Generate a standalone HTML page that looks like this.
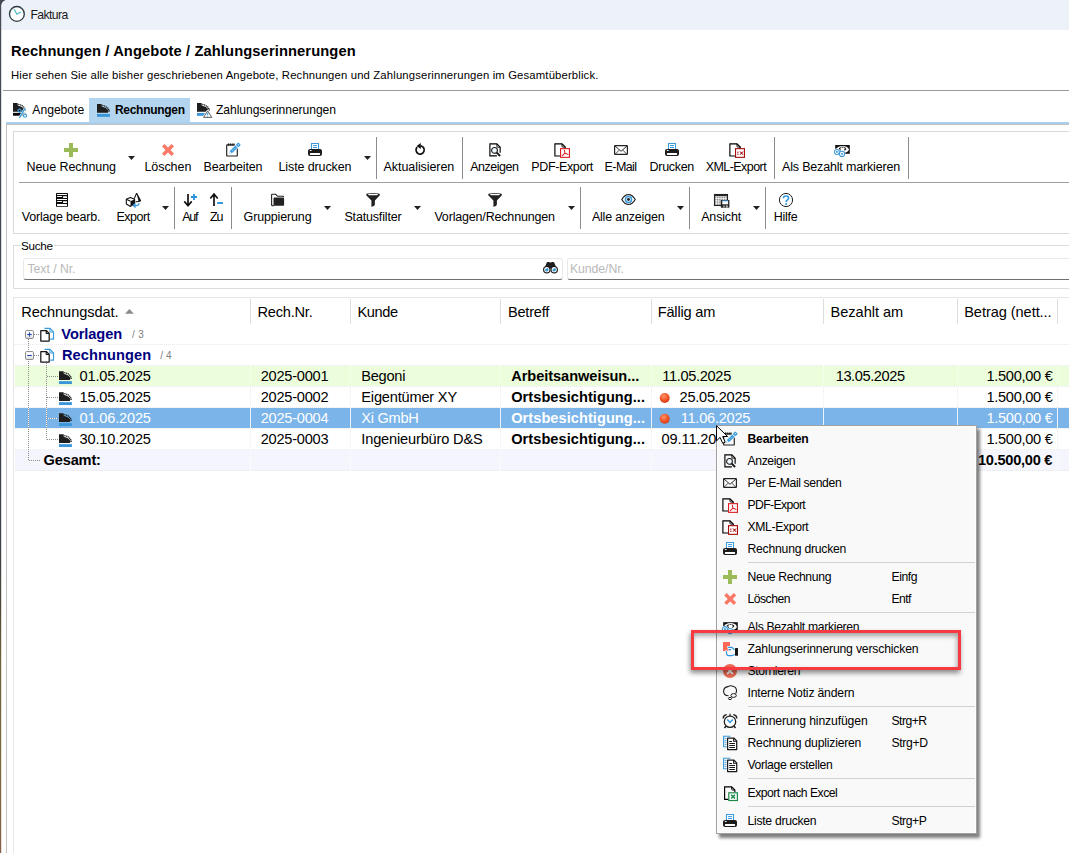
<!DOCTYPE html>
<html><head><meta charset="utf-8"><title>Faktura</title>
<style>
html,body{margin:0;padding:0;}
body{width:1069px;height:853px;position:relative;overflow:hidden;background:#fff;font-family:"Liberation Sans",sans-serif;}
.t{position:absolute;white-space:nowrap;line-height:20px;}
.r{position:absolute;}
svg{overflow:visible;}
</style></head><body>
<div class="r" style="left:0px;top:0px;width:1069px;height:30px;background:#edf1f8;"></div>
<svg class="r" style="left:0px;top:0px;" width="8" height="853" viewBox="0 0 8 853"><defs><linearGradient id="lb" gradientUnits="userSpaceOnUse" x1="0" y1="0" x2="0" y2="853"><stop offset="0" stop-color="#454c53"/><stop offset="0.64" stop-color="#3c4248"/><stop offset="0.71" stop-color="#4d4838"/><stop offset="0.77" stop-color="#6e6238"/><stop offset="0.9" stop-color="#7c6c3e"/><stop offset="1" stop-color="#855f48"/></linearGradient></defs><path d="M0 0H6.2Q1.6 0.8 1.2 6V853H0Z" fill="url(#lb)"/><path d="M6.2 0Q1.6 0.8 1.2 6" stroke="#f6f8fc" stroke-width="0.8" fill="none" transform="translate(0.7,0.6)"/></svg>
<svg class="r" style="left:8px;top:5px;" width="18" height="18" viewBox="0 0 18 18"><circle cx="8.9" cy="8.9" r="7.4" fill="#fff" stroke="#2c3a42" stroke-width="1.35"/><path d="M6.2 4.5L8.9 9.3L12.5 7.3" stroke="#4dbdc0" stroke-width="1.3" fill="none" stroke-linejoin="round" stroke-linecap="round"/></svg>
<span class="t" style="left:30.40px;top:5px;font-size:12.2px;color:#1a1a1a;letter-spacing:-0.562px;">Faktura</span>
<span class="t" style="left:11.00px;top:41px;font-size:14.7px;font-weight:700;color:#000;letter-spacing:0.116px;">Rechnungen / Angebote / Zahlungserinnerungen</span>
<span class="t" style="left:11.00px;top:65px;font-size:11.3px;color:#000;letter-spacing:0.151px;">Hier sehen Sie alle bisher geschriebenen Angebote, Rechnungen und Zahlungserinnerungen im Gesamtüberblick.</span>
<div class="r" style="left:3px;top:90px;width:1066px;height:1px;background:#9a9a9a;"></div>
<div class="r" style="left:89px;top:98px;width:101px;height:24px;background:#b3d5ef;"></div>
<div class="r" style="left:6px;top:122px;width:1063px;height:2px;background:#a9cfee;"></div>
<div class="r" style="left:6px;top:124px;width:1063px;height:1px;background:#c2c2c2;"></div>
<div class="r" style="left:6px;top:124px;width:1px;height:729px;background:#c2c2c2;"></div>
<span class="t" style="left:32.30px;top:100px;font-size:12.2px;color:#000;letter-spacing:-0.034px;">Angebote</span>
<span class="t" style="left:115.00px;top:100px;font-size:12px;font-weight:700;color:#000;letter-spacing:-0.297px;">Rechnungen</span>
<span class="t" style="left:216.00px;top:100px;font-size:12.1px;color:#000;letter-spacing:-0.057px;">Zahlungserinnerungen</span>
<div class="r" style="left:13px;top:131px;width:1056px;height:103px;background:#fff;box-sizing:border-box;border:1px solid #d9d9d9;border-right:none;"></div>
<div class="r" style="left:19px;top:182px;width:1050px;height:1px;background:#a0a0a0;"></div>
<span class="t" style="left:26.50px;top:157px;font-size:12.5px;color:#000;letter-spacing:-0.071px;">Neue Rechnung</span>
<svg class="r" style="left:128px;top:156px;" width="7" height="4" viewBox="0 0 7 4"><path d="M0 0H7L3.5 4Z" fill="#222"/></svg>
<span class="t" style="left:144.40px;top:157px;font-size:12.5px;color:#000;letter-spacing:-0.044px;">Löschen</span>
<span class="t" style="left:203.50px;top:157px;font-size:12.5px;color:#000;letter-spacing:-0.162px;">Bearbeiten</span>
<span class="t" style="left:278.50px;top:157px;font-size:12.5px;color:#000;letter-spacing:-0.112px;">Liste drucken</span>
<svg class="r" style="left:364px;top:156px;" width="7" height="4" viewBox="0 0 7 4"><path d="M0 0H7L3.5 4Z" fill="#222"/></svg>
<div class="r" style="left:376px;top:137px;width:1px;height:42px;background:#8c8c8c;"></div>
<span class="t" style="left:383.60px;top:157px;font-size:12.5px;color:#000;letter-spacing:-0.072px;">Aktualisieren</span>
<div class="r" style="left:462px;top:137px;width:1px;height:42px;background:#8c8c8c;"></div>
<span class="t" style="left:470.20px;top:157px;font-size:12.5px;color:#000;letter-spacing:-0.475px;">Anzeigen</span>
<span class="t" style="left:531.30px;top:157px;font-size:12.5px;color:#000;letter-spacing:-0.365px;">PDF-Export</span>
<span class="t" style="left:604.60px;top:157px;font-size:12.5px;color:#000;letter-spacing:-0.605px;">E-Mail</span>
<span class="t" style="left:649.60px;top:157px;font-size:12.5px;color:#000;letter-spacing:-0.308px;">Drucken</span>
<span class="t" style="left:705.70px;top:157px;font-size:12.5px;color:#000;letter-spacing:-0.554px;">XML-Export</span>
<div class="r" style="left:774px;top:137px;width:1px;height:42px;background:#8c8c8c;"></div>
<span class="t" style="left:782.00px;top:157px;font-size:12.5px;color:#000;letter-spacing:-0.169px;">Als Bezahlt markieren</span>
<div class="r" style="left:908px;top:137px;width:1px;height:42px;background:#8c8c8c;"></div>
<span class="t" style="left:21.80px;top:207px;font-size:12.5px;color:#000;letter-spacing:-0.209px;">Vorlage bearb.</span>
<span class="t" style="left:116.50px;top:207px;font-size:12.5px;color:#000;letter-spacing:-0.505px;">Export</span>
<svg class="r" style="left:162px;top:206px;" width="7" height="4" viewBox="0 0 7 4"><path d="M0 0H7L3.5 4Z" fill="#222"/></svg>
<div class="r" style="left:174px;top:187px;width:1px;height:42px;background:#8c8c8c;"></div>
<span class="t" style="left:182.20px;top:207px;font-size:12.5px;color:#000;letter-spacing:-1.194px;">Auf</span>
<span class="t" style="left:210.00px;top:207px;font-size:12.5px;color:#000;letter-spacing:-1.188px;">Zu</span>
<div class="r" style="left:231px;top:187px;width:1px;height:42px;background:#8c8c8c;"></div>
<span class="t" style="left:243.60px;top:207px;font-size:12.5px;color:#000;letter-spacing:-0.149px;">Gruppierung</span>
<svg class="r" style="left:324px;top:206px;" width="7" height="4" viewBox="0 0 7 4"><path d="M0 0H7L3.5 4Z" fill="#222"/></svg>
<span class="t" style="left:344.40px;top:207px;font-size:12.5px;color:#000;letter-spacing:-0.159px;">Statusfilter</span>
<svg class="r" style="left:414px;top:206px;" width="7" height="4" viewBox="0 0 7 4"><path d="M0 0H7L3.5 4Z" fill="#222"/></svg>
<span class="t" style="left:434.40px;top:207px;font-size:12.5px;color:#000;letter-spacing:-0.173px;">Vorlagen/Rechnungen</span>
<svg class="r" style="left:568px;top:206px;" width="7" height="4" viewBox="0 0 7 4"><path d="M0 0H7L3.5 4Z" fill="#222"/></svg>
<div class="r" style="left:580px;top:187px;width:1px;height:42px;background:#8c8c8c;"></div>
<span class="t" style="left:591.90px;top:207px;font-size:12.5px;color:#000;letter-spacing:-0.196px;">Alle anzeigen</span>
<svg class="r" style="left:677px;top:206px;" width="7" height="4" viewBox="0 0 7 4"><path d="M0 0H7L3.5 4Z" fill="#222"/></svg>
<div class="r" style="left:689px;top:187px;width:1px;height:42px;background:#8c8c8c;"></div>
<span class="t" style="left:701.20px;top:207px;font-size:12.5px;color:#000;letter-spacing:-0.165px;">Ansicht</span>
<svg class="r" style="left:753px;top:206px;" width="7" height="4" viewBox="0 0 7 4"><path d="M0 0H7L3.5 4Z" fill="#222"/></svg>
<div class="r" style="left:765px;top:187px;width:1px;height:42px;background:#8c8c8c;"></div>
<span class="t" style="left:773.70px;top:207px;font-size:12.5px;color:#000;letter-spacing:-0.278px;">Hilfe</span>
<div class="r" style="left:13px;top:245px;width:1056px;height:44px;background:#fff;box-sizing:border-box;border:1px solid #dcdcdc;border-right:none;"></div>
<div class="r" style="left:20.5px;top:240px;width:33.5px;height:12px;background:#fff;"></div>
<span class="t" style="left:21.00px;top:236px;font-size:11.7px;color:#000;letter-spacing:-0.292px;">Suche</span>
<div class="r" style="left:23px;top:257.5px;width:539.5px;height:22.5px;background:#fff;box-sizing:border-box;border:1px solid #e9e9e9;border-bottom:1px solid #707070;border-radius:3px;"></div>
<span class="t" style="left:27.50px;top:259px;font-size:12.3px;color:#b9b9b9;letter-spacing:-0.058px;">Text / Nr.</span>
<div class="r" style="left:566.5px;top:257.5px;width:510px;height:22.5px;background:#fff;box-sizing:border-box;border:1px solid #e9e9e9;border-bottom:1px solid #707070;border-radius:3px;"></div>
<span class="t" style="left:570.00px;top:259px;font-size:12.3px;color:#b9b9b9;letter-spacing:-0.087px;">Kunde/Nr.</span>
<div class="r" style="left:13px;top:297px;width:1056px;height:556px;background:#fff;box-sizing:border-box;border:1px solid #e6e6e6;border-right:none;border-bottom:none;"></div>
<span class="t" style="left:21.20px;top:302px;font-size:14.6px;color:#000;letter-spacing:-0.060px;">Rechnungsdat.</span>
<svg class="r" style="left:125.2px;top:309px;" width="9" height="5" viewBox="0 0 9 5"><path d="M0 4.8H8.8L4.4 0Z" fill="#8a8a8a"/></svg>
<span class="t" style="left:257.40px;top:302px;font-size:14.6px;color:#000;letter-spacing:-0.199px;">Rech.Nr.</span>
<span class="t" style="left:357.40px;top:302px;font-size:14.6px;color:#000;letter-spacing:-0.381px;">Kunde</span>
<span class="t" style="left:508.00px;top:302px;font-size:14.6px;color:#000;letter-spacing:-0.246px;">Betreff</span>
<span class="t" style="left:657.70px;top:302px;font-size:14.6px;color:#000;letter-spacing:-0.192px;">Fällig am</span>
<span class="t" style="left:830.60px;top:302px;font-size:14.6px;color:#000;letter-spacing:-0.048px;">Bezahlt am</span>
<span class="t" style="left:964.20px;top:302px;font-size:14.6px;color:#000;letter-spacing:-0.069px;">Betrag (nett...</span>
<div class="r" style="left:250px;top:299px;width:1px;height:25px;background:#dedede;"></div>
<div class="r" style="left:350px;top:299px;width:1px;height:25px;background:#dedede;"></div>
<div class="r" style="left:500px;top:299px;width:1px;height:25px;background:#dedede;"></div>
<div class="r" style="left:651px;top:299px;width:1px;height:25px;background:#dedede;"></div>
<div class="r" style="left:823px;top:299px;width:1px;height:25px;background:#dedede;"></div>
<div class="r" style="left:957px;top:299px;width:1px;height:25px;background:#dedede;"></div>
<div class="r" style="left:1057px;top:299px;width:1px;height:25px;background:#dedede;"></div>
<div class="r" style="left:15px;top:366px;width:1054px;height:20px;background:#ecfddc;"></div>
<div class="r" style="left:15px;top:408px;width:1054px;height:20px;background:#7ab4e9;"></div>
<div class="r" style="left:15px;top:450px;width:1054px;height:21px;background:#f5f6fd;"></div>
<div class="r" style="left:15px;top:344px;width:1054px;height:1px;background:transparent;border-top:1px dotted #e9e9e9;height:0;"></div>
<div class="r" style="left:15px;top:365px;width:1054px;height:1px;background:transparent;border-top:1px dotted #e9e9e9;height:0;"></div>
<div class="r" style="left:15px;top:386px;width:1054px;height:1px;background:transparent;border-top:1px dotted #e9e9e9;height:0;"></div>
<div class="r" style="left:15px;top:407px;width:1054px;height:1px;background:transparent;border-top:1px dotted #e9e9e9;height:0;"></div>
<div class="r" style="left:15px;top:428px;width:1054px;height:1px;background:transparent;border-top:1px dotted #e9e9e9;height:0;"></div>
<div class="r" style="left:15px;top:449px;width:1054px;height:1px;background:transparent;border-top:1px dotted #e9e9e9;height:0;"></div>
<div class="r" style="left:15px;top:470px;width:1054px;height:1px;background:transparent;border-top:1px dotted #e9e9e9;height:0;"></div>
<div class="r" style="left:250px;top:387px;width:1px;height:63px;background:transparent;border-left:1px dotted #ececec;width:0;"></div>
<div class="r" style="left:250px;top:366px;width:1px;height:20px;background:transparent;border-left:1px dotted #fbfffa;width:0;"></div>
<div class="r" style="left:250px;top:450px;width:1px;height:21px;background:transparent;border-left:1px dotted #ffffff;width:0;"></div>
<div class="r" style="left:250px;top:408px;width:1px;height:20px;background:#eaf3fc;"></div>
<div class="r" style="left:350px;top:387px;width:1px;height:63px;background:transparent;border-left:1px dotted #ececec;width:0;"></div>
<div class="r" style="left:350px;top:366px;width:1px;height:20px;background:transparent;border-left:1px dotted #fbfffa;width:0;"></div>
<div class="r" style="left:350px;top:450px;width:1px;height:21px;background:transparent;border-left:1px dotted #ffffff;width:0;"></div>
<div class="r" style="left:350px;top:408px;width:1px;height:20px;background:#eaf3fc;"></div>
<div class="r" style="left:500px;top:387px;width:1px;height:63px;background:transparent;border-left:1px dotted #ececec;width:0;"></div>
<div class="r" style="left:500px;top:366px;width:1px;height:20px;background:transparent;border-left:1px dotted #fbfffa;width:0;"></div>
<div class="r" style="left:500px;top:450px;width:1px;height:21px;background:transparent;border-left:1px dotted #ffffff;width:0;"></div>
<div class="r" style="left:500px;top:408px;width:1px;height:20px;background:#eaf3fc;"></div>
<div class="r" style="left:651px;top:387px;width:1px;height:63px;background:transparent;border-left:1px dotted #ececec;width:0;"></div>
<div class="r" style="left:651px;top:366px;width:1px;height:20px;background:transparent;border-left:1px dotted #fbfffa;width:0;"></div>
<div class="r" style="left:651px;top:450px;width:1px;height:21px;background:transparent;border-left:1px dotted #ffffff;width:0;"></div>
<div class="r" style="left:651px;top:408px;width:1px;height:20px;background:#eaf3fc;"></div>
<div class="r" style="left:823px;top:387px;width:1px;height:63px;background:transparent;border-left:1px dotted #ececec;width:0;"></div>
<div class="r" style="left:823px;top:366px;width:1px;height:20px;background:transparent;border-left:1px dotted #fbfffa;width:0;"></div>
<div class="r" style="left:823px;top:450px;width:1px;height:21px;background:transparent;border-left:1px dotted #ffffff;width:0;"></div>
<div class="r" style="left:823px;top:408px;width:1px;height:20px;background:#eaf3fc;"></div>
<div class="r" style="left:957px;top:387px;width:1px;height:63px;background:transparent;border-left:1px dotted #ececec;width:0;"></div>
<div class="r" style="left:957px;top:366px;width:1px;height:20px;background:transparent;border-left:1px dotted #fbfffa;width:0;"></div>
<div class="r" style="left:957px;top:450px;width:1px;height:21px;background:transparent;border-left:1px dotted #ffffff;width:0;"></div>
<div class="r" style="left:957px;top:408px;width:1px;height:20px;background:#eaf3fc;"></div>
<div class="r" style="left:1057px;top:387px;width:1px;height:63px;background:transparent;border-left:1px dotted #ececec;width:0;"></div>
<div class="r" style="left:1057px;top:366px;width:1px;height:20px;background:transparent;border-left:1px dotted #fbfffa;width:0;"></div>
<div class="r" style="left:1057px;top:450px;width:1px;height:21px;background:transparent;border-left:1px dotted #ffffff;width:0;"></div>
<div class="r" style="left:1057px;top:408px;width:1px;height:20px;background:#eaf3fc;"></div>
<span class="t" style="left:79.50px;top:366px;font-size:14.6px;color:#000;letter-spacing:-0.175px;">01.05.2025</span>
<span class="t" style="left:260.70px;top:366px;font-size:14.6px;color:#000;letter-spacing:-0.240px;">2025-0001</span>
<span class="t" style="left:361.30px;top:366px;font-size:14.6px;color:#000;letter-spacing:-0.273px;">Begoni</span>
<span class="t" style="left:511.20px;top:366px;font-size:14.6px;font-weight:700;color:#000;letter-spacing:-0.052px;">Arbeitsanweisun...</span>
<span class="t" style="left:662.30px;top:366px;font-size:14.6px;color:#000;letter-spacing:-0.333px;">11.05.2025</span>
<span class="t" style="left:835.70px;top:366px;font-size:14.6px;color:#000;letter-spacing:-0.408px;">13.05.2025</span>
<span class="t" style="left:986.40px;top:366px;font-size:14.6px;color:#000;letter-spacing:-0.290px;">1.500,00 €</span>
<span class="t" style="left:79.50px;top:387px;font-size:14.6px;color:#000;letter-spacing:-0.175px;">15.05.2025</span>
<span class="t" style="left:260.70px;top:387px;font-size:14.6px;color:#000;letter-spacing:-0.240px;">2025-0002</span>
<span class="t" style="left:361.30px;top:387px;font-size:14.6px;color:#000;letter-spacing:-0.192px;">Eigentümer XY</span>
<span class="t" style="left:511.20px;top:387px;font-size:14.6px;font-weight:700;color:#000;letter-spacing:0.048px;">Ortsbesichtigung...</span>
<span class="t" style="left:679.50px;top:387px;font-size:14.6px;color:#000;letter-spacing:-0.230px;">25.05.2025</span>
<span class="t" style="left:986.40px;top:387px;font-size:14.6px;color:#000;letter-spacing:-0.290px;">1.500,00 €</span>
<span class="t" style="left:79.50px;top:408px;font-size:14.6px;color:#fff;letter-spacing:-0.175px;">01.06.2025</span>
<span class="t" style="left:260.70px;top:408px;font-size:14.6px;color:#fff;letter-spacing:-0.240px;">2025-0004</span>
<span class="t" style="left:361.30px;top:408px;font-size:14.6px;color:#fff;letter-spacing:-0.270px;">Xi GmbH</span>
<span class="t" style="left:511.20px;top:408px;font-size:14.6px;font-weight:700;color:#fff;letter-spacing:0.048px;">Ortsbesichtigung...</span>
<span class="t" style="left:680.70px;top:408px;font-size:14.6px;color:#fff;letter-spacing:-0.244px;">11.06.2025</span>
<span class="t" style="left:986.40px;top:408px;font-size:14.6px;color:#fff;letter-spacing:-0.290px;">1.500,00 €</span>
<span class="t" style="left:79.50px;top:429px;font-size:14.6px;color:#000;letter-spacing:-0.175px;">30.10.2025</span>
<span class="t" style="left:260.70px;top:429px;font-size:14.6px;color:#000;letter-spacing:-0.240px;">2025-0003</span>
<span class="t" style="left:361.30px;top:429px;font-size:14.6px;color:#000;letter-spacing:-0.167px;">Ingenieurbüro D&amp;S</span>
<span class="t" style="left:511.20px;top:429px;font-size:14.6px;font-weight:700;color:#000;letter-spacing:0.048px;">Ortsbesichtigung...</span>
<span class="t" style="left:661.50px;top:429px;font-size:14.6px;color:#000;letter-spacing:-0.110px;">09.11.2025</span>
<span class="t" style="left:986.40px;top:429px;font-size:14.6px;color:#000;letter-spacing:-0.290px;">1.500,00 €</span>
<span class="t" style="left:61.30px;top:324px;font-size:14.6px;font-weight:700;color:#000080;letter-spacing:-0.070px;">Vorlagen</span>
<span class="t" style="left:132.00px;top:325px;font-size:10px;color:#808080;letter-spacing:0.340px;">/ 3</span>
<span class="t" style="left:62.00px;top:345px;font-size:14.6px;font-weight:700;color:#000080;letter-spacing:0.076px;">Rechnungen</span>
<span class="t" style="left:160.20px;top:346px;font-size:10px;color:#808080;letter-spacing:0.190px;">/ 4</span>
<span class="t" style="left:43.50px;top:450px;font-size:14.6px;font-weight:700;color:#000;letter-spacing:-0.152px;">Gesamt:</span>
<span class="t" style="left:978.00px;top:450px;font-size:14.6px;font-weight:700;color:#000;letter-spacing:-0.263px;">10.500,00 €</span>
<svg class="r" style="left:0;top:0" width="1069" height="853" viewBox="0 0 1069 853"><g transform="translate(13,102.9)"><path d="M0 0H4.7V2.3Q5.3 2.9 6.2 3Q8.5 3.3 10.2 5.1Q11.1 6.1 11.5 7.2L10.8 8.75H0Z" fill="#1e1e1e"/><circle cx="5.9" cy="1.5" r="0.74" fill="#1e1e1e"/><circle cx="7.7" cy="2.0" r="0.74" fill="#1e1e1e"/><circle cx="9.3" cy="2.9" r="0.74" fill="#1e1e1e"/><circle cx="10.7" cy="4.1" r="0.74" fill="#1e1e1e"/><circle cx="11.7" cy="5.5" r="0.74" fill="#1e1e1e"/><circle cx="12.2" cy="7.0" r="0.74" fill="#1e1e1e"/>
<rect x="0" y="9.95" width="12.9" height="2.9" fill="#0a0a0a"/></g><g transform="translate(17.6,108)"><path d="M7.4 0.4L1.8 9.8" stroke="#fff" stroke-width="2.2"/><circle cx="7.4" cy="7.7" r="2.6" fill="#fff"/>
<path d="M7.4 0.4L1.8 9.8" stroke="#3a9adb" stroke-width="1.35"/>
<circle cx="2" cy="2.6" r="1.55" fill="#1e1e1e" stroke="#3a9adb" stroke-width="1.2"/><circle cx="7.4" cy="7.7" r="1.55" fill="#fff" stroke="#3a9adb" stroke-width="1.2"/></g><g transform="translate(97,104)"><path d="M0 0H4.7V2.3Q5.3 2.9 6.2 3Q8.5 3.3 10.2 5.1Q11.1 6.1 11.5 7.2L10.8 8.75H0Z" fill="#1e1e1e"/><circle cx="5.9" cy="1.5" r="0.74" fill="#1e1e1e"/><circle cx="7.7" cy="2.0" r="0.74" fill="#1e1e1e"/><circle cx="9.3" cy="2.9" r="0.74" fill="#1e1e1e"/><circle cx="10.7" cy="4.1" r="0.74" fill="#1e1e1e"/><circle cx="11.7" cy="5.5" r="0.74" fill="#1e1e1e"/><circle cx="12.2" cy="7.0" r="0.74" fill="#1e1e1e"/>
<rect x="0" y="9.95" width="12.9" height="2.9" fill="#3a96d8"/></g><g transform="translate(197,103)"><path d="M0 0H4.7V2.3Q5.3 2.9 6.2 3Q8.5 3.3 10.2 5.1Q11.1 6.1 11.5 7.2L10.8 8.75H0Z" fill="#1e1e1e"/><circle cx="5.9" cy="1.5" r="0.74" fill="#1e1e1e"/><circle cx="7.7" cy="2.0" r="0.74" fill="#1e1e1e"/><circle cx="9.3" cy="2.9" r="0.74" fill="#1e1e1e"/><circle cx="10.7" cy="4.1" r="0.74" fill="#1e1e1e"/><circle cx="11.7" cy="5.5" r="0.74" fill="#1e1e1e"/><circle cx="12.2" cy="7.0" r="0.74" fill="#1e1e1e"/>
<rect x="0" y="9.95" width="12.9" height="2.9" fill="#3a96d8"/></g><g transform="translate(203.2,110.6)"><path d="M4.5 0.3L8.6 6.8H0.4Z" fill="#fff" stroke="#fff" stroke-width="2.2" stroke-linejoin="round"/><path d="M4.5 0.3L8.6 6.8H0.4Z" fill="#fff" stroke="#4a4a4a" stroke-width="0.9" stroke-linejoin="round"/><path d="M4.5 2.2V4.6" stroke="#3a9adb" stroke-width="1.1"/><circle cx="4.5" cy="5.6" r="0.55" fill="#3a9adb"/></g><g transform="translate(63,142)"><path d="M6 1H10V6H15V10H10V15H6V10H1V6H6Z" fill="#9bbb59"/></g><g transform="translate(160,142)"><path d="M3.2 3.2L12.8 12.8M12.8 3.2L3.2 12.8" stroke="#fa7866" stroke-width="3.4" fill="none"/></g><g transform="translate(225,142)"><path d="M9.5 2.8H2.3Q1.7 2.8 1.7 3.4V13.4Q1.7 14 2.3 14H11.7Q12.3 14 12.3 13.4V6.6" fill="none" stroke="#222" stroke-width="1.15"/>
<ellipse cx="3.3" cy="2.5" rx="0.5" ry="1.5" fill="#111"/><ellipse cx="5.2" cy="2.5" rx="0.5" ry="1.5" fill="#111"/><ellipse cx="7.1" cy="2.5" rx="0.5" ry="1.5" fill="#111"/><ellipse cx="9" cy="2.5" rx="0.5" ry="1.5" fill="#111"/>
<g transform="translate(4.3,11.8) rotate(-45)"><path d="M-0.3 0L2.8 -1.75H10.3V1.75H2.8Z" fill="#3a9adb" stroke="#fff" stroke-width="0.5"/><rect x="10.9" y="-1.85" width="3.6" height="3.7" rx="0.9" fill="#3a9adb"/><rect x="12.1" y="-0.5" width="1.2" height="1" fill="#eaf5fd"/>
<path d="M4.2 0H8.6" stroke="#d9ecfa" stroke-width="0.7" stroke-dasharray="1 0.7"/><path d="M1 -0.6L2.2 -0.9V0.9L1 0.6Z" fill="#e8f3fc"/></g></g><g transform="translate(307,142)"><path d="M4.5 7V1.5H11.5V7" fill="#fff" stroke="#3a9adb" stroke-width="1.1"/>
<path d="M6 3.6H10M6 5.5H10" stroke="#3a9adb" stroke-width="1"/>
<rect x="1" y="6.9" width="14" height="7.1" rx="2" fill="#1c1c1c"/>
<rect x="2.9" y="10.9" width="10.2" height="2" rx="0.6" fill="#fff"/>
<rect x="2.7" y="8.1" width="2" height="0.9" rx="0.4" fill="#fff"/></g><g transform="translate(412,142)"><path d="M5.2 5.1A4.1 4.1 0 1 0 8.6 3.9" fill="none" stroke="#111" stroke-width="1.7"/>
<path d="M4.6 3.9L8.8 0.9V6.9Z" fill="#111"/></g><g transform="translate(487,142)"><path d="M13.15 10.7V5.15L9.9 1.9H2.9V13.9H9.9" fill="none" stroke="#000" stroke-width="1.15" stroke-linejoin="miter"/><path d="M9.9 2V4.4Q9.9 5.15 10.65 5.15H13.1" fill="none" stroke="#000" stroke-width="0.95"/>
<circle cx="7.5" cy="8.4" r="2.9" fill="#f2f9ff" stroke="#161616" stroke-width="1.05"/>
<path d="M9.7 10.6L13.1 14" stroke="#161616" stroke-width="1.9"/></g><g transform="translate(554,142)"><path d="M6.6 13.95H0.9V1.8H8L11.25 5.05V6.4" fill="none" stroke="#000" stroke-width="1.15" stroke-linejoin="miter"/><path d="M8 1.9V4.3Q8 5.05 8.75 5.05H11.2" fill="none" stroke="#000" stroke-width="0.95"/><rect x="6.55" y="6.65" width="8.9" height="8.7" fill="#fff" stroke="#dc1c24" stroke-width="1.1"/>
<path d="M10.4 8.3Q10.9 10.5 10.9 11.2Q9.5 12.5 8.4 13.6M10.9 11.2Q12.5 11.6 14 12.4" fill="none" stroke="#dc1c24" stroke-width="1.05" stroke-linecap="round"/></g><g transform="translate(613,142)"><rect x="1.6" y="3.6" width="12.8" height="8.8" rx="0.6" fill="#fff" stroke="#222" stroke-width="1.2"/>
<path d="M2 4L8 9.3L14 4" fill="none" stroke="#222" stroke-width="0.95"/><path d="M2.2 12L6.4 8M13.8 12L9.6 8" stroke="#222" stroke-width="0.8"/></g><g transform="translate(664,142)"><path d="M4.5 7V1.5H11.5V7" fill="#fff" stroke="#3a9adb" stroke-width="1.1"/>
<path d="M6 3.6H10M6 5.5H10" stroke="#3a9adb" stroke-width="1"/>
<rect x="1" y="6.9" width="14" height="7.1" rx="2" fill="#1c1c1c"/>
<rect x="2.9" y="10.9" width="10.2" height="2" rx="0.6" fill="#fff"/>
<rect x="2.7" y="8.1" width="2" height="0.9" rx="0.4" fill="#fff"/></g><g transform="translate(729,142)"><path d="M6.6 13.95H0.9V1.8H8L11.25 5.05V6.4" fill="none" stroke="#000" stroke-width="1.15" stroke-linejoin="miter"/><path d="M8 1.9V4.3Q8 5.05 8.75 5.05H11.2" fill="none" stroke="#000" stroke-width="0.95"/><rect x="6.55" y="6.65" width="8.9" height="8.7" fill="#fff" stroke="#a60a0a" stroke-width="1.1"/>
<path d="M8 10.2H9.6M8 12.2H9.6" stroke="#a60a0a" stroke-width="0.9"/>
<path d="M10.9 9.4L14.1 12.9M14.1 9.4L10.9 12.9" stroke="#a60a0a" stroke-width="0.95"/><rect x="11.8" y="10.4" width="1.5" height="1.5" fill="#a60a0a"/></g><g transform="translate(834,142)"><rect x="1.2" y="3" width="14.6" height="8.8" fill="#111"/>
<ellipse cx="8.5" cy="7.5" rx="6.3" ry="3.6" fill="#fff"/>
<path d="M6.6 5.4L5.3 6.9L6.6 8.4M10.4 5.4L11.7 6.9L10.4 8.4" fill="none" stroke="#111" stroke-width="1.1"/>
<path d="M7.5 5.2H9.6" stroke="#111" stroke-width="0.9"/>
<circle cx="2.9" cy="9.9" r="3.3" fill="#fff"/><circle cx="8" cy="11.9" r="3.4" fill="#fff"/>
<circle cx="2.9" cy="9.9" r="2.5" fill="#fff" stroke="#3a9adb" stroke-width="1.05"/><rect x="2.1" y="9.1" width="1.6" height="1.6" fill="#1f86d1"/>
<circle cx="8" cy="11.9" r="2.6" fill="#fff" stroke="#3a9adb" stroke-width="1.05"/><rect x="7.2" y="11.1" width="1.6" height="1.6" fill="#1f86d1"/></g><g transform="translate(54,192)"><rect x="2" y="1" width="12" height="13.8" rx="0.6" fill="#0d0d0d"/>
<rect x="3" y="2" width="10" height="0.95" rx="0.3" fill="#fff"/>
<rect x="3" y="4.1" width="5" height="0.95" rx="0.3" fill="#fff"/><rect x="9" y="4.2" width="4" height="1.8" rx="0.4" fill="#fff"/>
<rect x="3" y="7.05" width="10" height="0.95" rx="0.3" fill="#fff"/>
<rect x="3" y="9.1" width="5" height="0.95" rx="0.3" fill="#fff"/><rect x="9" y="9.2" width="4" height="1.8" rx="0.4" fill="#fff"/>
<rect x="3" y="12" width="10" height="1.9" rx="0.5" fill="#fff"/></g><g transform="translate(125,192)"><path d="M1.3 7.3L5.4 5.4L9.6 7.3V11.9L5.5 14.4L1.3 12Z" fill="#fff" stroke="#111" stroke-width="1.1" stroke-linejoin="round"/>
<path d="M5.5 9.2L9.6 7.3V11.9L5.5 14.4Z" fill="#111"/><path d="M1.3 7.3L5.5 9.2" stroke="#111" stroke-width="1.1"/>
<path d="M11.6 1.2L9.2 6.6M11.6 1.2L15.6 8.7Q13.5 9.9 10.6 9.7" fill="none" stroke="#111" stroke-width="1.1" stroke-linejoin="round"/>
<path d="M11.6 1.2L15.6 8.7Q14.6 9.4 13.6 9.6Z" fill="#111"/>
<path d="M13.9 11.2Q14.2 13.4 11.6 13.5H8.6M10.4 11.6L8.3 13.5L10.6 15.6" fill="none" stroke="#3a9adb" stroke-width="1.4" stroke-linejoin="round"/></g><g transform="translate(183,192)"><path d="M5 1.9V13.6M1.3 9.4L5 13.8L8.7 9.4" fill="none" stroke="#111" stroke-width="1.7"/>
<path d="M11 2V8M8 5H14" stroke="#2a92da" stroke-width="1.8"/></g><g transform="translate(209,192)"><path d="M5 14V2.2M1.3 6.5L5 2L8.7 6.5" fill="none" stroke="#111" stroke-width="1.7"/>
<path d="M8.2 11H14" stroke="#2a92da" stroke-width="1.9"/></g><g transform="translate(270,192)"><path d="M1.6 13V2.9Q1.6 2.3 2.2 2.3H5.6L7.6 4.3H13Q13.6 4.3 13.6 5" fill="none" stroke="#222" stroke-width="1.1"/>
<path d="M1.6 13.2Q1.6 13.8 2.2 13.8H13.4Q14.1 13.8 14.1 13.1V6.3Q14.1 5.6 13.4 5.6H4.3Q3.5 5.6 3.5 6.4V13.8Z" fill="#222"/><path d="M1.6 12.5Q1.6 13.8 2.6 13.8H4" fill="none" stroke="#222" stroke-width="1.1"/></g><g transform="translate(365,192)"><path d="M1.2 2.4Q1.2 0.9 8 0.9Q14.9 0.9 14.9 2.4Q14.9 3.3 13.9 4.3L9.9 8.4V12.6Q9.7 14.3 6.7 14.8L6.4 14.7V8.4L2.2 4.3Q1.2 3.3 1.2 2.4Z" fill="#222"/>
<ellipse cx="8" cy="2.5" rx="5.2" ry="0.85" fill="#fff"/></g><g transform="translate(487,192)"><path d="M1.2 2.4Q1.2 0.9 8 0.9Q14.9 0.9 14.9 2.4Q14.9 3.3 13.9 4.3L9.9 8.4V12.6Q9.7 14.3 6.7 14.8L6.4 14.7V8.4L2.2 4.3Q1.2 3.3 1.2 2.4Z" fill="#222"/>
<ellipse cx="8" cy="2.5" rx="5.2" ry="0.85" fill="#fff"/></g><g transform="translate(620,192)"><path d="M1.8 7.5Q4.6 2.6 8.5 2.6Q12.4 2.6 15.2 7.5Q12.4 12.4 8.5 12.4Q4.6 12.4 1.8 7.5Z" fill="#fff" stroke="#222" stroke-width="1.2"/>
<circle cx="8.5" cy="7.5" r="4" fill="#d8ecfb"/><circle cx="8.5" cy="7.5" r="3" fill="#fff" stroke="#3a9adb" stroke-width="1.5"/>
<circle cx="8.5" cy="7.5" r="1.45" fill="#1c1c1c"/></g><g transform="translate(713,192)"><rect x="1.5" y="2.5" width="13" height="11" fill="#8f8f8f"/><path d="M3.35 2V13.5" stroke="#fff" stroke-width="0.8" opacity="0.9"/><path d="M5.70 2V13.5" stroke="#fff" stroke-width="0.8" opacity="0.9"/><path d="M8.05 2V13.5" stroke="#fff" stroke-width="0.8" opacity="0.9"/><path d="M10.40 2V13.5" stroke="#fff" stroke-width="0.8" opacity="0.9"/><path d="M12.75 2V13.5" stroke="#fff" stroke-width="0.8" opacity="0.9"/><path d="M1 4.30H14.5" stroke="#fff" stroke-width="0.8" opacity="0.9"/><path d="M1 6.60H14.5" stroke="#fff" stroke-width="0.8" opacity="0.9"/><path d="M1 8.90H14.5" stroke="#fff" stroke-width="0.8" opacity="0.9"/><path d="M1 11.20H14.5" stroke="#fff" stroke-width="0.8" opacity="0.9"/>
<rect x="1.5" y="2.5" width="13" height="11" fill="none" stroke="#222" stroke-width="1.1"/><rect x="1.5" y="2.5" width="13" height="1.6" fill="#222"/>
<rect x="7.8" y="8" width="8.6" height="7.7" rx="0.6" fill="#222"/>
<rect x="9.3" y="8.9" width="5.8" height="3.4" fill="#fff"/><rect x="9.3" y="8.4" width="5.8" height="0.9" fill="#3a9adb"/>
<rect x="10" y="13.4" width="2.2" height="2.3" fill="#888"/><rect x="13" y="13.4" width="1.8" height="2.3" fill="#bbb"/></g><g transform="translate(778,192)"><circle cx="8" cy="8" r="6.6" fill="#fff" stroke="#222" stroke-width="1"/>
<path d="M5.4 6.2Q5.5 4 8 4Q10.6 4 10.6 6.1Q10.6 7.3 9.2 8.1Q8.1 8.8 8.1 10" fill="none" stroke="#2d97e0" stroke-width="1.55"/>
<circle cx="8.1" cy="12" r="1" fill="#2d97e0"/></g><g transform="translate(542.5,261.5)"><path d="M2.2 6L4.2 1.2Q4.5 0.6 5.2 0.6H6.6Q7.2 0.6 7.5 1.1H8.5Q8.8 0.6 9.4 0.6H10.8Q11.5 0.6 11.8 1.2L13.8 6L11 9L8.9 7H7.1L5 9Z" fill="#1c1c1c"/>
<circle cx="4.3" cy="8.2" r="3.75" fill="#1c1c1c"/><circle cx="11.7" cy="8.2" r="3.75" fill="#1c1c1c"/>
<circle cx="4.3" cy="8.2" r="2.6" fill="#fff"/><circle cx="11.7" cy="8.2" r="2.6" fill="#fff"/>
<path d="M2.5 8.7Q2.6 7.2 4 7.3Q4.4 6.2 5.6 6.8Q6.2 7.3 6 8.6Q5.8 10 4.3 10Q2.6 10 2.5 8.7Z" fill="#3a9adb"/>
<path d="M9.9 8.7Q10 7.2 11.4 7.3Q11.8 6.2 13 6.8Q13.6 7.3 13.4 8.6Q13.2 10 11.7 10Q10 10 9.9 8.7Z" fill="#3a9adb"/></g><path d="M28.5 339V460.5" stroke="#8c8c8c" stroke-width="1" stroke-dasharray="1 1"/><path d="M34 334.5H40" stroke="#8c8c8c" stroke-width="1" stroke-dasharray="1 1"/><path d="M34 355.5H40" stroke="#8c8c8c" stroke-width="1" stroke-dasharray="1 1"/><path d="M46.5 363V439.5" stroke="#8c8c8c" stroke-width="1" stroke-dasharray="1 1"/><path d="M47 376.5H58" stroke="#8c8c8c" stroke-width="1" stroke-dasharray="1 1"/><g transform="translate(59,371.2)"><path d="M0 0H4.7V2.3Q5.3 2.9 6.2 3Q8.5 3.3 10.2 5.1Q11.1 6.1 11.5 7.2L10.8 8.75H0Z" fill="#1e1e1e"/><circle cx="5.9" cy="1.5" r="0.74" fill="#1e1e1e"/><circle cx="7.7" cy="2.0" r="0.74" fill="#1e1e1e"/><circle cx="9.3" cy="2.9" r="0.74" fill="#1e1e1e"/><circle cx="10.7" cy="4.1" r="0.74" fill="#1e1e1e"/><circle cx="11.7" cy="5.5" r="0.74" fill="#1e1e1e"/><circle cx="12.2" cy="7.0" r="0.74" fill="#1e1e1e"/>
<rect x="0" y="9.95" width="12.9" height="2.9" fill="#3a96d8"/></g><path d="M47 397.5H58" stroke="#8c8c8c" stroke-width="1" stroke-dasharray="1 1"/><g transform="translate(59,392.2)"><path d="M0 0H4.7V2.3Q5.3 2.9 6.2 3Q8.5 3.3 10.2 5.1Q11.1 6.1 11.5 7.2L10.8 8.75H0Z" fill="#1e1e1e"/><circle cx="5.9" cy="1.5" r="0.74" fill="#1e1e1e"/><circle cx="7.7" cy="2.0" r="0.74" fill="#1e1e1e"/><circle cx="9.3" cy="2.9" r="0.74" fill="#1e1e1e"/><circle cx="10.7" cy="4.1" r="0.74" fill="#1e1e1e"/><circle cx="11.7" cy="5.5" r="0.74" fill="#1e1e1e"/><circle cx="12.2" cy="7.0" r="0.74" fill="#1e1e1e"/>
<rect x="0" y="9.95" width="12.9" height="2.9" fill="#3a96d8"/></g><path d="M47 418.5H58" stroke="#8c8c8c" stroke-width="1" stroke-dasharray="1 1"/><g transform="translate(59,413.2)"><path d="M0 0H4.7V2.3Q5.3 2.9 6.2 3Q8.5 3.3 10.2 5.1Q11.1 6.1 11.5 7.2L10.8 8.75H0Z" fill="#1e1e1e"/><circle cx="5.9" cy="1.5" r="0.74" fill="#1e1e1e"/><circle cx="7.7" cy="2.0" r="0.74" fill="#1e1e1e"/><circle cx="9.3" cy="2.9" r="0.74" fill="#1e1e1e"/><circle cx="10.7" cy="4.1" r="0.74" fill="#1e1e1e"/><circle cx="11.7" cy="5.5" r="0.74" fill="#1e1e1e"/><circle cx="12.2" cy="7.0" r="0.74" fill="#1e1e1e"/>
<rect x="0" y="9.95" width="12.9" height="2.9" fill="#3a96d8"/></g><path d="M47 439.5H58" stroke="#8c8c8c" stroke-width="1" stroke-dasharray="1 1"/><g transform="translate(59,434.2)"><path d="M0 0H4.7V2.3Q5.3 2.9 6.2 3Q8.5 3.3 10.2 5.1Q11.1 6.1 11.5 7.2L10.8 8.75H0Z" fill="#1e1e1e"/><circle cx="5.9" cy="1.5" r="0.74" fill="#1e1e1e"/><circle cx="7.7" cy="2.0" r="0.74" fill="#1e1e1e"/><circle cx="9.3" cy="2.9" r="0.74" fill="#1e1e1e"/><circle cx="10.7" cy="4.1" r="0.74" fill="#1e1e1e"/><circle cx="11.7" cy="5.5" r="0.74" fill="#1e1e1e"/><circle cx="12.2" cy="7.0" r="0.74" fill="#1e1e1e"/>
<rect x="0" y="9.95" width="12.9" height="2.9" fill="#3a96d8"/></g><path d="M29 460.5H40" stroke="#8c8c8c" stroke-width="1" stroke-dasharray="1 1"/><path d="M28.5 408V428" stroke="#fff" stroke-width="1" stroke-dasharray="1 1"/><path d="M46.5 408V428" stroke="#fff" stroke-width="1" stroke-dasharray="1 1"/><path d="M48 418.5H58" stroke="#fff" stroke-width="1" stroke-dasharray="1 1"/><g transform="translate(25,330)"><defs><linearGradient id="eg330" x1="0" y1="0" x2="0" y2="1"><stop offset="0" stop-color="#fff"/><stop offset="0.6" stop-color="#f4f4f4"/><stop offset="1" stop-color="#d6d6d6"/></linearGradient></defs>
<rect x="0.5" y="0.5" width="8" height="8" rx="1.3" fill="url(#eg330)" stroke="#8e8e8e" stroke-width="1"/>
<path d="M2.2 4.5H6.8" stroke="#2848a8" stroke-width="1.1"/><path d="M4.5 2.3V6.7" stroke="#2848a8" stroke-width="1.1"/></g><g transform="translate(25,351)"><defs><linearGradient id="eg351" x1="0" y1="0" x2="0" y2="1"><stop offset="0" stop-color="#fff"/><stop offset="0.6" stop-color="#f4f4f4"/><stop offset="1" stop-color="#d6d6d6"/></linearGradient></defs>
<rect x="0.5" y="0.5" width="8" height="8" rx="1.3" fill="url(#eg351)" stroke="#8e8e8e" stroke-width="1"/>
<path d="M2.2 4.5H6.8" stroke="#2848a8" stroke-width="1.1"/></g><g transform="translate(39.6,327.5)"><path d="M4.9 0.9H10.4L13.9 4.4V11.6H10.6" fill="none" stroke="#3a9adb" stroke-width="1.15" stroke-linejoin="round"/><path d="M10.3 0.9V3.9Q10.3 4.5 10.9 4.5H13.7" fill="none" stroke="#3a9adb" stroke-width="1.05"/>
<path d="M1.2 3H6.7L9.6 5.9V13.5H1.2Z" fill="#fff" stroke="#161616" stroke-width="1.25" stroke-linejoin="round"/>
<path d="M6.6 3V5.4Q6.6 6 7.2 6H9.6" fill="none" stroke="#161616" stroke-width="1.15"/></g><g transform="translate(39.6,348.5)"><path d="M4.9 0.9H10.4L13.9 4.4V11.6H10.6" fill="none" stroke="#3a9adb" stroke-width="1.15" stroke-linejoin="round"/><path d="M10.3 0.9V3.9Q10.3 4.5 10.9 4.5H13.7" fill="none" stroke="#3a9adb" stroke-width="1.05"/>
<path d="M1.2 3H6.7L9.6 5.9V13.5H1.2Z" fill="#fff" stroke="#161616" stroke-width="1.25" stroke-linejoin="round"/>
<path d="M6.6 3V5.4Q6.6 6 7.2 6H9.6" fill="none" stroke="#161616" stroke-width="1.15"/></g><g transform="translate(659.2,392.5)"><defs><radialGradient id="rg1" cx="40%" cy="32%" r="70%"><stop offset="0" stop-color="#ff9468"/><stop offset="0.55" stop-color="#f2582c"/><stop offset="1" stop-color="#d83a16"/></radialGradient></defs><circle cx="5.5" cy="5.5" r="5" fill="url(#rg1)"/></g><g transform="translate(659.2,413.3)"><defs><radialGradient id="rg2" cx="40%" cy="32%" r="70%"><stop offset="0" stop-color="#ff9468"/><stop offset="0.55" stop-color="#f2582c"/><stop offset="1" stop-color="#d83a16"/></radialGradient></defs><circle cx="5.5" cy="5.5" r="5" fill="url(#rg2)"/></g></svg>
<div class="r" style="left:716px;top:425px;width:261px;height:409px;background:#f9f9f9;box-sizing:border-box;border:1px solid #a0a0a0;box-shadow:3px 4px 3px rgba(0,0,0,0.5), inset 0 0 0 1px #fdfdfd;"></div>
<span class="t" style="left:747.50px;top:429px;font-size:12.2px;font-weight:700;color:#000;letter-spacing:-0.194px;">Bearbeiten</span>
<span class="t" style="left:747.50px;top:451px;font-size:12.2px;color:#000;letter-spacing:-0.382px;">Anzeigen</span>
<span class="t" style="left:747.50px;top:473px;font-size:12.2px;color:#000;letter-spacing:-0.379px;">Per E-Mail senden</span>
<span class="t" style="left:747.50px;top:495px;font-size:12.2px;color:#000;letter-spacing:-0.602px;">PDF-Export</span>
<span class="t" style="left:747.50px;top:517px;font-size:12.2px;color:#000;letter-spacing:-0.345px;">XML-Export</span>
<span class="t" style="left:747.50px;top:539px;font-size:12.2px;color:#000;letter-spacing:-0.228px;">Rechnung drucken</span>
<span class="t" style="left:747.50px;top:567px;font-size:12.2px;color:#000;letter-spacing:-0.348px;">Neue Rechnung</span>
<span class="t" style="left:891.50px;top:567px;font-size:12.2px;color:#000;letter-spacing:-0.451px;">Einfg</span>
<span class="t" style="left:747.50px;top:589px;font-size:12.2px;color:#000;letter-spacing:-0.521px;">Löschen</span>
<span class="t" style="left:891.50px;top:589px;font-size:12.2px;color:#000;letter-spacing:-0.576px;">Entf</span>
<span class="t" style="left:747.50px;top:617px;font-size:12.2px;color:#000;letter-spacing:-0.323px;">Als Bezahlt markieren</span>
<span class="t" style="left:747.50px;top:639px;font-size:12.2px;color:#000;letter-spacing:-0.177px;">Zahlungserinnerung verschicken</span>
<span class="t" style="left:747.50px;top:661px;font-size:12.2px;color:#000;letter-spacing:-0.366px;">Stornieren</span>
<span class="t" style="left:747.50px;top:683px;font-size:12.2px;color:#000;letter-spacing:-0.176px;">Interne Notiz ändern</span>
<span class="t" style="left:747.50px;top:711px;font-size:12.2px;color:#000;letter-spacing:-0.123px;">Erinnerung hinzufügen</span>
<span class="t" style="left:891.50px;top:711px;font-size:12.2px;color:#000;letter-spacing:-0.542px;">Strg+R</span>
<span class="t" style="left:747.50px;top:733px;font-size:12.2px;color:#000;letter-spacing:-0.211px;">Rechnung duplizieren</span>
<span class="t" style="left:891.50px;top:733px;font-size:12.2px;color:#000;letter-spacing:-0.362px;">Strg+D</span>
<span class="t" style="left:747.50px;top:755px;font-size:12.2px;color:#000;letter-spacing:-0.349px;">Vorlage erstellen</span>
<span class="t" style="left:747.50px;top:783px;font-size:12.2px;color:#000;letter-spacing:-0.496px;">Export nach Excel</span>
<span class="t" style="left:747.50px;top:811px;font-size:12.2px;color:#000;letter-spacing:-0.289px;">Liste drucken</span>
<span class="t" style="left:891.50px;top:811px;font-size:12.2px;color:#000;letter-spacing:-0.467px;">Strg+P</span>
<div class="r" style="left:748px;top:562px;width:227px;height:1px;background:#d2d2d2;"></div>
<div class="r" style="left:748px;top:612px;width:227px;height:1px;background:#d2d2d2;"></div>
<div class="r" style="left:748px;top:706px;width:227px;height:1px;background:#d2d2d2;"></div>
<div class="r" style="left:748px;top:778px;width:227px;height:1px;background:#d2d2d2;"></div>
<div class="r" style="left:748px;top:806px;width:227px;height:1px;background:#d2d2d2;"></div>
<svg class="r" style="left:0;top:0" width="1069" height="853" viewBox="0 0 1069 853"><g transform="translate(722,431)"><path d="M9.5 2.8H2.3Q1.7 2.8 1.7 3.4V13.4Q1.7 14 2.3 14H11.7Q12.3 14 12.3 13.4V6.6" fill="none" stroke="#222" stroke-width="1.15"/>
<ellipse cx="3.3" cy="2.5" rx="0.5" ry="1.5" fill="#111"/><ellipse cx="5.2" cy="2.5" rx="0.5" ry="1.5" fill="#111"/><ellipse cx="7.1" cy="2.5" rx="0.5" ry="1.5" fill="#111"/><ellipse cx="9" cy="2.5" rx="0.5" ry="1.5" fill="#111"/>
<g transform="translate(4.3,11.8) rotate(-45)"><path d="M-0.3 0L2.8 -1.75H10.3V1.75H2.8Z" fill="#3a9adb" stroke="#fff" stroke-width="0.5"/><rect x="10.9" y="-1.85" width="3.6" height="3.7" rx="0.9" fill="#3a9adb"/><rect x="12.1" y="-0.5" width="1.2" height="1" fill="#eaf5fd"/>
<path d="M4.2 0H8.6" stroke="#d9ecfa" stroke-width="0.7" stroke-dasharray="1 0.7"/><path d="M1 -0.6L2.2 -0.9V0.9L1 0.6Z" fill="#e8f3fc"/></g></g><g transform="translate(722,453)"><path d="M13.15 10.7V5.15L9.9 1.9H2.9V13.9H9.9" fill="none" stroke="#000" stroke-width="1.15" stroke-linejoin="miter"/><path d="M9.9 2V4.4Q9.9 5.15 10.65 5.15H13.1" fill="none" stroke="#000" stroke-width="0.95"/>
<circle cx="7.5" cy="8.4" r="2.9" fill="#f2f9ff" stroke="#161616" stroke-width="1.05"/>
<path d="M9.7 10.6L13.1 14" stroke="#161616" stroke-width="1.9"/></g><g transform="translate(722,475)"><rect x="1.6" y="3.6" width="12.8" height="8.8" rx="0.6" fill="#fff" stroke="#222" stroke-width="1.2"/>
<path d="M2 4L8 9.3L14 4" fill="none" stroke="#222" stroke-width="0.95"/><path d="M2.2 12L6.4 8M13.8 12L9.6 8" stroke="#222" stroke-width="0.8"/></g><g transform="translate(722,497)"><path d="M6.6 13.95H0.9V1.8H8L11.25 5.05V6.4" fill="none" stroke="#000" stroke-width="1.15" stroke-linejoin="miter"/><path d="M8 1.9V4.3Q8 5.05 8.75 5.05H11.2" fill="none" stroke="#000" stroke-width="0.95"/><rect x="6.55" y="6.65" width="8.9" height="8.7" fill="#fff" stroke="#dc1c24" stroke-width="1.1"/>
<path d="M10.4 8.3Q10.9 10.5 10.9 11.2Q9.5 12.5 8.4 13.6M10.9 11.2Q12.5 11.6 14 12.4" fill="none" stroke="#dc1c24" stroke-width="1.05" stroke-linecap="round"/></g><g transform="translate(722,519)"><path d="M6.6 13.95H0.9V1.8H8L11.25 5.05V6.4" fill="none" stroke="#000" stroke-width="1.15" stroke-linejoin="miter"/><path d="M8 1.9V4.3Q8 5.05 8.75 5.05H11.2" fill="none" stroke="#000" stroke-width="0.95"/><rect x="6.55" y="6.65" width="8.9" height="8.7" fill="#fff" stroke="#a60a0a" stroke-width="1.1"/>
<path d="M8 10.2H9.6M8 12.2H9.6" stroke="#a60a0a" stroke-width="0.9"/>
<path d="M10.9 9.4L14.1 12.9M14.1 9.4L10.9 12.9" stroke="#a60a0a" stroke-width="0.95"/><rect x="11.8" y="10.4" width="1.5" height="1.5" fill="#a60a0a"/></g><g transform="translate(722,541)"><path d="M4.5 7V1.5H11.5V7" fill="#fff" stroke="#3a9adb" stroke-width="1.1"/>
<path d="M6 3.6H10M6 5.5H10" stroke="#3a9adb" stroke-width="1"/>
<rect x="1" y="6.9" width="14" height="7.1" rx="2" fill="#1c1c1c"/>
<rect x="2.9" y="10.9" width="10.2" height="2" rx="0.6" fill="#fff"/>
<rect x="2.7" y="8.1" width="2" height="0.9" rx="0.4" fill="#fff"/></g><g transform="translate(722,569)"><path d="M6 1H10V6H15V10H10V15H6V10H1V6H6Z" fill="#9bbb59"/></g><g transform="translate(722.2,591)"><path d="M3.2 3.2L12.8 12.8M12.8 3.2L3.2 12.8" stroke="#fa7866" stroke-width="3.4" fill="none"/></g><g transform="translate(722,619.2)"><rect x="1.2" y="3" width="14.6" height="8.8" fill="#111"/>
<ellipse cx="8.5" cy="7.5" rx="6.3" ry="3.6" fill="#fff"/>
<path d="M6.6 5.4L5.3 6.9L6.6 8.4M10.4 5.4L11.7 6.9L10.4 8.4" fill="none" stroke="#111" stroke-width="1.1"/>
<path d="M7.5 5.2H9.6" stroke="#111" stroke-width="0.9"/>
<circle cx="2.9" cy="9.9" r="3.3" fill="#fff"/><circle cx="8" cy="11.9" r="3.4" fill="#fff"/>
<circle cx="2.9" cy="9.9" r="2.5" fill="#fff" stroke="#3a9adb" stroke-width="1.05"/><rect x="2.1" y="9.1" width="1.6" height="1.6" fill="#1f86d1"/>
<circle cx="8" cy="11.9" r="2.6" fill="#fff" stroke="#3a9adb" stroke-width="1.05"/><rect x="7.2" y="11.1" width="1.6" height="1.6" fill="#1f86d1"/></g><g transform="translate(722,642)"><rect x="1" y="0" width="7" height="9" fill="#fb6a56"/>
<path d="M6.2 5.3H9.7L12.6 7.7M6.9 7.6H8.7M4.4 9.6Q4.3 13.6 6.6 13.6H9.4L12.6 12.7" fill="none" stroke="#fbfbfb" stroke-width="2.5" stroke-linecap="round" stroke-linejoin="round"/>
<path d="M6.2 5.3H9.7L12.6 7.7M6.9 7.6H8.7M4.4 9.6Q4.3 13.6 6.6 13.6H9.4L12.6 12.7" fill="none" stroke="#2f95dc" stroke-width="1.15" stroke-linecap="round" stroke-linejoin="round"/>
<rect x="12.6" y="5.7" width="3.8" height="8.5" fill="#fbfbfb"/><rect x="13" y="6.1" width="3" height="7.7" rx="0.5" fill="#161616"/></g><g transform="translate(722,663)"><circle cx="8" cy="8" r="7" fill="#ed6a55"/><path d="M5.2 5.2L10.8 10.8M10.8 5.2L5.2 10.8" stroke="#fff" stroke-width="1.9"/></g><g transform="translate(722,685)"><path d="M6.6 10.8Q1.6 10.4 1.6 6.2Q1.8 2 6 1.6Q8.4 0.1 11 1.3Q14.5 2.2 14.5 5.8Q14.5 7.6 13.6 8.6" fill="none" stroke="#1c1c1c" stroke-width="1.1"/>
<ellipse cx="11.6" cy="10.5" rx="2.7" ry="1.9" fill="#f9f9f9" stroke="#1c1c1c" stroke-width="1"/><ellipse cx="8" cy="13.5" rx="1.6" ry="1.1" fill="#f9f9f9" stroke="#1c1c1c" stroke-width="1"/></g><g transform="translate(722,713)"><path d="M0.6 5.8Q0 1.4 5 0.9L4.6 2.3Q2 3 1.9 5.2Z" fill="#1c1c1c"/><path d="M15.4 5.8Q16 1.4 11 0.9L11.4 2.3Q14 3 14.1 5.2Z" fill="#1c1c1c"/>
<circle cx="8" cy="8.7" r="5.7" fill="#fff" stroke="#1c1c1c" stroke-width="1.25"/>
<path d="M8 0.8V2.9" stroke="#1c1c1c" stroke-width="1.2"/><path d="M3.9 13.2L2.5 15M12.1 13.2L13.5 15" stroke="#1c1c1c" stroke-width="1.5"/>
<path d="M5.3 6.6L8 9.4L10.7 6.6" fill="none" stroke="#2d97e0" stroke-width="1.5"/></g><g transform="translate(722,735)"><path d="M8.4 1.2H1.6V11.7H4.6" fill="none" stroke="#3a9adb" stroke-width="1.1"/>
<path d="M2.6 3.4H4.4M2.6 5.4H4.4M2.6 7.4H4.4M2.6 9.4H4.4" stroke="#3a9adb" stroke-width="0.9"/>
<path d="M5.6 3H11.8L14.7 5.9V14.6H5.6Z" fill="#fff" stroke="#1a1a1a" stroke-width="1.25" stroke-linejoin="round"/>
<path d="M11.6 3V6.2H14.7" fill="none" stroke="#1a1a1a" stroke-width="1.1"/>
<path d="M7.3 6.4H10M7.3 8.5H13M7.3 10.5H13M7.3 12.5H13" stroke="#1a1a1a" stroke-width="1.05"/></g><g transform="translate(722,757)"><path d="M8.4 1.2H1.6V11.7H4.6" fill="none" stroke="#3a9adb" stroke-width="1.1"/>
<path d="M2.6 3.4H4.4M2.6 5.4H4.4M2.6 7.4H4.4M2.6 9.4H4.4" stroke="#3a9adb" stroke-width="0.9"/>
<path d="M5.6 3H11.8L14.7 5.9V14.6H5.6Z" fill="#fff" stroke="#1a1a1a" stroke-width="1.25" stroke-linejoin="round"/>
<path d="M11.6 3V6.2H14.7" fill="none" stroke="#1a1a1a" stroke-width="1.1"/>
<path d="M7.3 6.4H10M7.3 8.5H13M7.3 10.5H13M7.3 12.5H13" stroke="#1a1a1a" stroke-width="1.05"/></g><g transform="translate(722,785)"><path d="M6.6 14.3H2.6V1.9H9.7L12.85 5.05V7" fill="none" stroke="#000" stroke-width="1.15" stroke-linejoin="miter"/><path d="M9.7 2V4.3Q9.7 5.05 10.45 5.05H12.8" fill="none" stroke="#000" stroke-width="0.95"/>
<rect x="6.8" y="7.8" width="8.6" height="7.7" fill="#fff" stroke="#1e8a4a" stroke-width="1.2"/>
<path d="M9.2 9.7L13 13.6M13 9.7L9.2 13.6" stroke="#1e8a4a" stroke-width="1.5"/></g><g transform="translate(722,813)"><path d="M4.5 7V1.5H11.5V7" fill="#fff" stroke="#3a9adb" stroke-width="1.1"/>
<path d="M6 3.6H10M6 5.5H10" stroke="#3a9adb" stroke-width="1"/>
<rect x="1" y="6.9" width="14" height="7.1" rx="2" fill="#1c1c1c"/>
<rect x="2.9" y="10.9" width="10.2" height="2" rx="0.6" fill="#fff"/>
<rect x="2.7" y="8.1" width="2" height="0.9" rx="0.4" fill="#fff"/></g><g transform="translate(716,425)"><path d="M0.5 0.7V15.9L4.1 12.4L6.7 18.3L9.2 17.2L6.7 11.5H11.6Z" fill="#fff" stroke="#000" stroke-width="1" stroke-linejoin="miter"/></g></svg>
<div class="r" style="left:691px;top:630px;width:270px;height:40px;background:transparent;box-sizing:border-box;border:3px solid #f73a3f;box-shadow:-1px 3px 5px rgba(0,0,0,0.45), inset -1px 3px 5px rgba(0,0,0,0.35);"></div>
</body></html>
